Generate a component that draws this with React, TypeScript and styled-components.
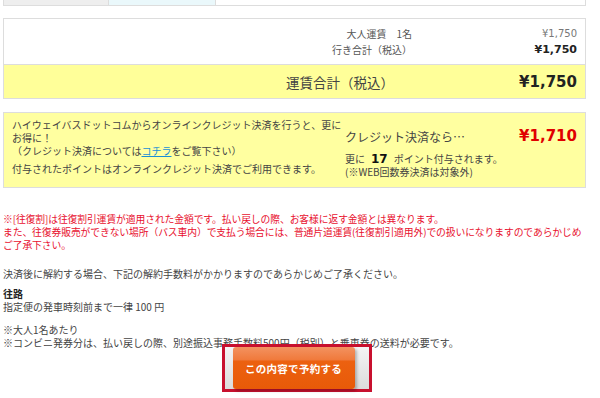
import React from 'react';
import styled, { createGlobalStyle } from 'styled-components';

const GlobalStyle = createGlobalStyle`
  html, body {
    margin: 0;
    padding: 0;
    background: #fff;
  }
  body {
    font-family: "DejaVu Sans", "Noto Sans CJK JP", sans-serif;
    font-size: 10px;
    color: #333;
  }
`;

const JP = `"Noto Sans CJK JP", "DejaVu Sans", sans-serif`;
const NUM = `"DejaVu Sans", "Noto Sans CJK JP", sans-serif`;

const Page = styled.div`
  width: 583px;
  margin-left: 3px;
  height: 398px;
  overflow: hidden;
`;

const TabStrip = styled.div`
  display: flex;
  height: 6px;
  border: 1px solid #ddd;
  border-top: none;
  box-sizing: border-box;
`;

const TabCell = styled.div<{ $bg: string; $w?: number }>`
  width: ${p => (p.$w ? `${p.$w}px` : 'auto')};
  flex: ${p => (p.$w ? 'none' : '1')};
  background: ${p => p.$bg};
  border-right: ${p => (p.$w ? '1px solid #ddd' : 'none')};
`;

const SummaryBox = styled.div`
  margin-top: 12px;
  border: 1px solid #ddd;
`;

const FareRows = styled.div`
  display: grid;
  grid-template-columns: 1fr 165px;
  padding: 7px 8px 6px 0;
  line-height: 16px;
`;

const FareLabel = styled.div`
  text-align: right;
  font-family: ${JP};
  font-size: 10px;
  color: #555;
`;

const FareValue = styled.div<{ $bold?: boolean }>`
  text-align: right;
  font-family: ${NUM};
  font-size: ${p => (p.$bold ? '11px' : '10px')};
  font-weight: ${p => (p.$bold ? 700 : 400)};
  color: ${p => (p.$bold ? '#222' : '#777')};
`;

const TotalRow = styled.div`
  display: grid;
  grid-template-columns: 1fr 165px;
  align-items: center;
  height: 34px;
  padding-right: 8px;
  background: #ffff99;
  border-top: 1px solid #ddd;
  box-sizing: border-box;
`;

const TotalLabel = styled.div`
  text-align: right;
  padding-right: 18px;
  font-family: ${JP};
  font-size: 13.5px;
  color: #444;
`;

const BigPrice = styled.div<{ $red?: boolean }>`
  text-align: right;
  font-family: ${NUM};
  font-size: 15px;
  font-weight: 700;
  color: ${p => (p.$red ? '#e00000' : '#222')};
`;

const CreditBox = styled.div`
  margin-top: 13px;
  height: 76px;
  box-sizing: border-box;
  border: 1px solid #ddd;
  background: #ffffa0;
  display: grid;
  grid-template-columns: 333px 1fr;
  padding: 5px 8px 0 8px;
`;

const CreditNote = styled.div`
  font-family: ${JP};
  font-size: 10px;
  line-height: 13px;
  color: #444;
`;

const PointNote = styled.p`
  margin: 5px 0 0;
`;

const Link = styled.a`
  color: #1a8fd6;
  text-decoration: underline;
`;

const CreditSide = styled.div`
  display: flex;
  flex-direction: column;
`;

const CreditHead = styled.div`
  display: flex;
  justify-content: space-between;
  align-items: center;
  margin-top: 8px;
  height: 20px;
`;

const CreditTitle = styled.span`
  font-family: ${JP};
  font-size: 12px;
  color: #444;
`;

const PointLines = styled.div`
  margin-top: 7px;
  font-family: ${JP};
  font-size: 10px;
  line-height: 12px;
  color: #444;
`;

const PointRow = styled.div`
  display: flex;
  align-items: baseline;
  gap: 6px;
  height: 13px;
`;

const PointNum = styled.b`
  font-family: ${NUM};
  font-size: 12px;
  line-height: 12px;
  color: #111;
`;

const Notes = styled.div`
  margin-top: 25px;
  font-family: ${JP};
  font-size: 10px;
  line-height: 13px;
`;

const Warning = styled.p`
  margin: 0;
  color: #e8102e;
  font-size: 9.8px;
  letter-spacing: -0.1px;
`;

const Para = styled.p<{ $gap?: number }>`
  margin: ${p => p.$gap ?? 0}px 0 0;
  color: #444;
`;

const Strong = styled.b`
  color: #222;
`;

const ButtonArea = styled.div`
  display: flex;
  justify-content: center;
  margin-top: -5px;
`;

const Highlight = styled.div`
  width: 122px;
  height: 42px;
  border: 3px solid #c8102e;
  padding: 0 14px 0 8px;
  box-sizing: content-box;
  background: linear-gradient(#f4f4f4, #dcdcdc);
  display: flex;
  margin-left: 4px;
`;

const ReserveButton = styled.button`
  width: 122px;
  height: 42px;
  border: none;
  border-radius: 3px;
  padding: 0;
  background: linear-gradient(#f39260 0%, #f07a3c 30%, #ec6110 34%, #e85a08 100%);
  color: #fff;
  font-family: ${JP};
  font-size: 10.5px;
  font-weight: 700;
  letter-spacing: 0.3px;
  box-shadow: 2px 2px 3px rgba(0, 0, 0, 0.25);
  cursor: pointer;
`;

export default function App() {
  return (
    <>
      <GlobalStyle />
      <Page>
        <TabStrip>
          <TabCell $bg="#eeeeee" $w={104} />
          <TabCell $bg="#eaf8fb" $w={106} />
          <TabCell $bg="#ffffff" />
        </TabStrip>

        <SummaryBox>
          <FareRows>
            <FareLabel>大人運賃　1名</FareLabel>
            <FareValue>¥1,750</FareValue>
            <FareLabel>行き合計（税込）</FareLabel>
            <FareValue $bold>¥1,750</FareValue>
          </FareRows>
          <TotalRow>
            <TotalLabel>運賃合計（税込）</TotalLabel>
            <BigPrice>¥1,750</BigPrice>
          </TotalRow>
        </SummaryBox>

        <CreditBox>
          <CreditNote>
            ハイウェイバスドットコムからオンラインクレジット決済を行うと、更にお得に！
            <br />
            （クレジット決済については<Link href="#">コチラ</Link>をご覧下さい）
            <PointNote>付与されたポイントはオンラインクレジット決済でご利用できます。</PointNote>
          </CreditNote>
          <CreditSide>
            <CreditHead>
              <CreditTitle>クレジット決済なら…</CreditTitle>
              <BigPrice $red>¥1,710</BigPrice>
            </CreditHead>
            <PointLines>
              <PointRow>
                <span>更に</span>
                <PointNum>17</PointNum>
                <span>ポイント付与されます。</span>
              </PointRow>
              <div>(※WEB回数券決済は対象外)</div>
            </PointLines>
          </CreditSide>
        </CreditBox>

        <Notes>
          <Warning>※[往復割]は往復割引運賃が適用された金額です。払い戻しの際、お客様に返す金額とは異なります。</Warning>
          <Warning>
            また、往復券販売ができない場所（バス車内）で支払う場合には、普通片道運賃(往復割引適用外)での扱いになりますのであらかじめ
            <br />
            ご了承下さい。
          </Warning>
          <Para $gap={15}>決済後に解約する場合、下記の解約手数料がかかりますのであらかじめご了承ください。</Para>
          <Para $gap={7}>
            <Strong>往路</Strong>
            <br />
            指定便の発車時刻前まで一律 100 円
          </Para>
          <Para $gap={10}>
            ※大人1名あたり
            <br />
            ※コンビニ発券分は、払い戻しの際、別途振込事務手数料500円（税別）と乗車券の送料が必要です。
          </Para>
        </Notes>

        <ButtonArea>
          <Highlight>
            <ReserveButton type="button">この内容で予約する</ReserveButton>
          </Highlight>
        </ButtonArea>
      </Page>
    </>
  );
}
